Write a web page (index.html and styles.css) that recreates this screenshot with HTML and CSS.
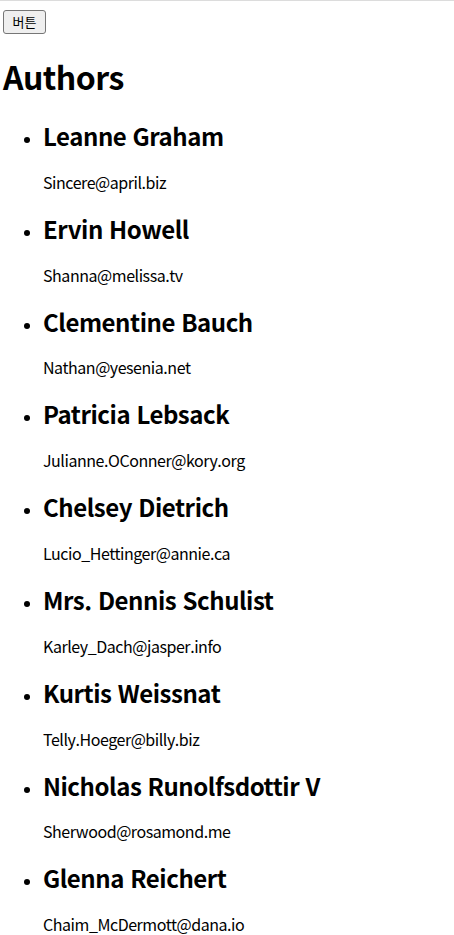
FILE: index.html
```html
<!DOCTYPE html>
<html lang="ko">
<head>
<meta charset="utf-8">
<link rel="stylesheet" href="styles.css">
</head>
<body>
<div class="topline"></div>
<div class="page">
  <button class="btn" type="button">버튼</button>
  <h1 class="title">Authors</h1>
  <ul class="authors">
    <li class="author"><h2 class="name">Leanne Graham</h2><p class="email">Sincere@april.biz</p></li>
    <li class="author"><h2 class="name">Ervin Howell</h2><p class="email">Shanna@melissa.tv</p></li>
    <li class="author"><h2 class="name">Clementine Bauch</h2><p class="email">Nathan@yesenia.net</p></li>
    <li class="author"><h2 class="name">Patricia Lebsack</h2><p class="email">Julianne.OConner@kory.org</p></li>
    <li class="author"><h2 class="name">Chelsey Dietrich</h2><p class="email">Lucio_Hettinger@annie.ca</p></li>
    <li class="author"><h2 class="name">Mrs. Dennis Schulist</h2><p class="email">Karley_Dach@jasper.info</p></li>
    <li class="author"><h2 class="name">Kurtis Weissnat</h2><p class="email">Telly.Hoeger@billy.biz</p></li>
    <li class="author"><h2 class="name">Nicholas Runolfsdottir V</h2><p class="email">Sherwood@rosamond.me</p></li>
    <li class="author"><h2 class="name">Glenna Reichert</h2><p class="email">Chaim_McDermott@dana.io</p></li>
  </ul>
</div>
</body>
</html>
```
FILE: styles.css
```css
html, body {
  margin: 0;
  padding: 0;
  background: #fff;
}
body {
  font-family: "Noto Sans CJK KR", "Noto Sans", sans-serif;
  color: #000;
}
.topline {
  height: 1px;
  background: #dcdcdc;
}
.page {
  padding: 9px 3px 0 3px;
}
.btn {
  display: block;
  width: 43px;
  height: 24px;
  padding: 0;
  font-family: "Noto Sans CJK KR", sans-serif;
  font-size: 13px;
  line-height: 20px;
  color: #000;
  background: #efefef;
  border: 1px solid #767676;
  border-radius: 3px;
}
.title {
  font-size: 32px;
  font-weight: bold;
  line-height: 43px;
  letter-spacing: -0.5px;
  margin: 21.44px 0;
}
.authors {
  margin: 0;
  padding-left: 40px;
}
.author {
  list-style: disc;
}
.name {
  font-size: 24px;
  font-weight: bold;
  line-height: 32px;
  letter-spacing: -0.45px;
  margin: 19.92px 0;
}
.email {
  font-size: 16px;
  line-height: 21px;
  letter-spacing: -0.45px;
  margin: 0 0 19.92px;
}
```
